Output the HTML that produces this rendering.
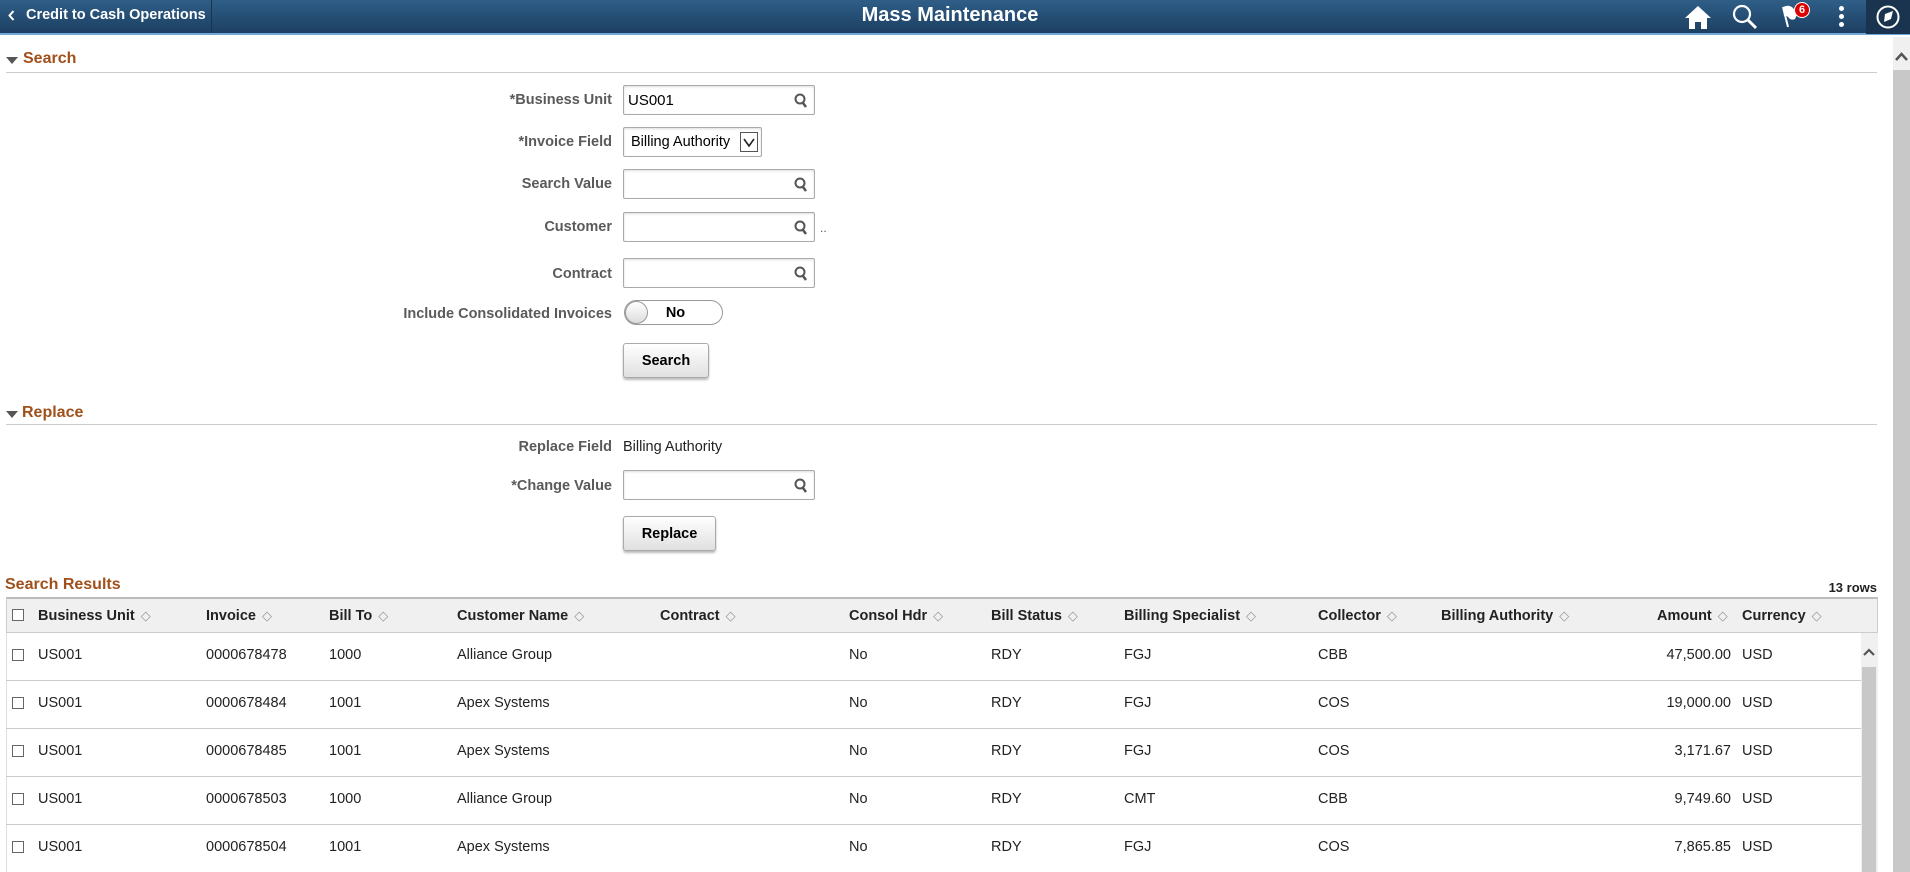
<!DOCTYPE html>
<html><head><meta charset="utf-8"><style>
*{box-sizing:border-box;margin:0;padding:0}
body{width:1910px;height:872px;overflow:hidden;background:#fff;font-family:"Liberation Sans",Arial,sans-serif;position:relative;color:#000}
.a{position:absolute}
.hdr{left:0;top:0;width:1910px;height:35px;background:linear-gradient(#2f5e87,#1c3f62);border-bottom:2px solid #6fa8d8}
.back{left:0;top:0;width:212px;height:33px;border-right:1px solid #16344f;color:#fff;font-weight:bold;font-size:14.5px;line-height:30px;padding-left:26px}
.title{left:0;width:1900px;top:1px;text-align:center;color:#fff;font-weight:bold;font-size:20px;line-height:29px}
.sec{color:#a0501a;font-weight:bold;font-size:16px}
.tri{width:0;height:0;border-left:6px solid transparent;border-right:6px solid transparent;border-top:7px solid #555}
.hr{height:1px;background:#ccc}
.lbl{width:612px;left:0;text-align:right;color:#5a5a5a;font-weight:bold;font-size:14.5px}
.inp{left:623px;width:192px;height:30px;border:1px solid #aaa;border-radius:2px;background:#fff;box-shadow:inset 0 1px 2px #ddd;font-size:15px;line-height:29px;padding-left:4px}
.mag{position:absolute;right:6px;top:7px}
.btn{left:623px;height:35px;border:1px solid #aaa;border-radius:3px;background:linear-gradient(#fff,#e0e0e0);box-shadow:0 2px 2px #bbb;font-weight:bold;font-size:14.5px;text-align:center;line-height:34px}
.th{top:598px;height:36px;line-height:36px;font-weight:bold;font-size:14.5px;color:#222}
.srt{display:inline-block;margin-left:6px;color:#999;font-size:13px;font-weight:normal;vertical-align:0}
.cb{width:12px;height:12px;border:1px solid #666;background:#fff}
.row{left:0;width:1860px;font-size:14.5px;color:#222}
</style></head><body>
<div class="a hdr"></div>
<div class="a back"><svg class="a" style="left:8px;top:10px" width="7" height="11" viewBox="0 0 7 11"><path d="M5.5 1 L1.5 5.5 L5.5 10" fill="none" stroke="#fff" stroke-width="2"/></svg>Credit to Cash Operations</div>
<div class="a title">Mass Maintenance</div>
<svg class="a" style="left:1684px;top:4px" width="28" height="26" viewBox="0 0 28 26"><path d="M14 2 L1 14 H5 V25 H11 V18 H17 V25 H23 V14 H27 Z" fill="#fff"/></svg>
<svg class="a" style="left:1731px;top:3px" width="28" height="28" viewBox="0 0 28 28"><circle cx="11" cy="11" r="8" fill="none" stroke="#fff" stroke-width="2.2"/><path d="M17 17 L25 25" stroke="#fff" stroke-width="3"/></svg>
<svg class="a" style="left:1780px;top:4px" width="22" height="24" viewBox="0 0 22 24"><path d="M3 3 Q9 0 13 4 Q15 7 19 6 L15 15 Q11 17 8 13 Q6 11 4 12" fill="#fff"/><path d="M3 3 L8 23" stroke="#fff" stroke-width="2"/></svg>
<div class="a" style="left:1794px;top:2px;width:16px;height:16px;border-radius:8px;background:#d00;border:1px solid #fff;color:#fff;font-size:11px;font-weight:bold;text-align:center;line-height:14px">6</div>
<div class="a" style="left:1839px;top:6px;width:5px;height:5px;border-radius:3px;background:#fff"></div>
<div class="a" style="left:1839px;top:14px;width:5px;height:5px;border-radius:3px;background:#fff"></div>
<div class="a" style="left:1839px;top:22px;width:5px;height:5px;border-radius:3px;background:#fff"></div>
<div class="a" style="left:1866px;top:0;width:44px;height:34px;background:#1a3450"></div>
<svg class="a" style="left:1875px;top:4px" width="26" height="26" viewBox="0 0 26 26"><circle cx="13" cy="13" r="10.5" fill="none" stroke="#fff" stroke-width="2"/><path d="M9 18 L10 10 L18 7 L16 15 Z" fill="#fff"/></svg>

<div class="a" style="left:1893px;top:37px;width:17px;height:835px;background:#f0f0f0"></div>
<div class="a" style="left:1893px;top:70px;width:17px;height:802px;background:#c8c8c8"></div>
<svg class="a" style="left:1895px;top:52px" width="13" height="10" viewBox="0 0 13 10"><path d="M1 8 L6.5 2 L12 8" fill="none" stroke="#555" stroke-width="2.5"/></svg>

<div class="a tri" style="left:6px;top:57px"></div>
<div class="a sec" style="left:23px;top:50px">Search</div>
<div class="a hr" style="left:6px;top:72px;width:1871px"></div>

<div class="a lbl" style="top:92px">*Business Unit</div>
<div class="a inp" style="top:85px">US001<svg class="mag" width="14" height="15" viewBox="0 0 14 15"><circle cx="6" cy="6" r="4.5" fill="none" stroke="#555" stroke-width="2"/><path d="M9 10 L12 14" stroke="#555" stroke-width="2.5"/></svg></div>
<div class="a lbl" style="top:134px">*Invoice Field</div>
<div class="a inp" style="top:127px;width:139px;padding-left:7px;font-size:14.5px">Billing Authority<div class="a" style="right:3px;top:4px;width:18px;height:20px;border:1px solid #555;background:#fff"><svg width="16" height="18" viewBox="0 0 16 18"><path d="M3 6 L8 13 L13 6" fill="none" stroke="#222" stroke-width="1.6"/></svg></div></div>
<div class="a lbl" style="top:176px">Search Value</div>
<div class="a inp" style="top:169px"><svg class="mag" width="14" height="15" viewBox="0 0 14 15"><circle cx="6" cy="6" r="4.5" fill="none" stroke="#555" stroke-width="2"/><path d="M9 10 L12 14" stroke="#555" stroke-width="2.5"/></svg></div>
<div class="a lbl" style="top:219px">Customer</div>
<div class="a inp" style="top:212px"><svg class="mag" width="14" height="15" viewBox="0 0 14 15"><circle cx="6" cy="6" r="4.5" fill="none" stroke="#555" stroke-width="2"/><path d="M9 10 L12 14" stroke="#555" stroke-width="2.5"/></svg></div>
<div class="a" style="left:820px;top:221px;font-size:12px;color:#555">..</div>
<div class="a lbl" style="top:266px">Contract</div>
<div class="a inp" style="top:258px"><svg class="mag" width="14" height="15" viewBox="0 0 14 15"><circle cx="6" cy="6" r="4.5" fill="none" stroke="#555" stroke-width="2"/><path d="M9 10 L12 14" stroke="#555" stroke-width="2.5"/></svg></div>
<div class="a lbl" style="top:306px">Include Consolidated Invoices</div>
<div class="a" style="left:624px;top:300px;width:99px;height:25px;border:1px solid #999;border-radius:13px;background:#fff;font-weight:bold;font-size:14.5px;line-height:24px;text-align:center;padding-left:4px">No</div>
<div class="a" style="left:625px;top:301px;width:23px;height:23px;border-radius:12px;border:1px solid #999;background:linear-gradient(#fff,#ddd)"></div>
<div class="a btn" style="top:343px;width:86px">Search</div>

<div class="a tri" style="left:6px;top:411px"></div>
<div class="a sec" style="left:22px;top:404px">Replace</div>
<div class="a hr" style="left:6px;top:424px;width:1871px"></div>
<div class="a lbl" style="top:439px">Replace Field</div>
<div class="a" style="left:623px;top:439px;font-size:14.5px;color:#222">Billing Authority</div>
<div class="a lbl" style="top:478px">*Change Value</div>
<div class="a inp" style="top:470px"><svg class="mag" width="14" height="15" viewBox="0 0 14 15"><circle cx="6" cy="6" r="4.5" fill="none" stroke="#555" stroke-width="2"/><path d="M9 10 L12 14" stroke="#555" stroke-width="2.5"/></svg></div>
<div class="a btn" style="top:516px;width:93px">Replace</div>

<div class="a sec" style="left:5px;top:576px">Search Results</div>
<div class="a" style="right:33px;top:580px;font-size:13px;font-weight:bold;color:#222">13 rows</div>
<div class="a" style="left:6px;top:597px;width:1872px;height:36px;background:#f0f0f0;border:1px solid #ccc;border-top:2px solid #bbb"></div>
<div class="a cb" style="left:12px;top:609px"></div>
<div class="a th" style="left:38px">Business Unit<span class="srt">&#9671;</span></div>
<div class="a th" style="left:206px">Invoice<span class="srt">&#9671;</span></div>
<div class="a th" style="left:329px">Bill To<span class="srt">&#9671;</span></div>
<div class="a th" style="left:457px">Customer Name<span class="srt">&#9671;</span></div>
<div class="a th" style="left:660px">Contract<span class="srt">&#9671;</span></div>
<div class="a th" style="left:849px">Consol Hdr<span class="srt">&#9671;</span></div>
<div class="a th" style="left:991px">Bill Status<span class="srt">&#9671;</span></div>
<div class="a th" style="left:1124px">Billing Specialist<span class="srt">&#9671;</span></div>
<div class="a th" style="left:1318px">Collector<span class="srt">&#9671;</span></div>
<div class="a th" style="left:1441px">Billing Authority<span class="srt">&#9671;</span></div>
<div class="a th" style="left:1657px">Amount<span class="srt">&#9671;</span></div>
<div class="a th" style="left:1742px">Currency<span class="srt">&#9671;</span></div>

<div class="a" style="left:6px;top:633px;width:1px;height:239px;background:#ddd"></div>
<div class="a" style="left:1861px;top:633px;width:17px;height:239px;background:#f0f0f0"></div>
<div class="a" style="left:1862px;top:667px;width:14px;height:205px;background:#c8c8c8"></div>
<svg class="a" style="left:1863px;top:648px" width="12" height="9" viewBox="0 0 12 9"><path d="M1 7 L6 2 L11 7" fill="none" stroke="#555" stroke-width="2.2"/></svg>

<div class="a hr" style="left:6px;top:680px;width:1855px"></div>
<div class="a hr" style="left:6px;top:728px;width:1855px"></div>
<div class="a hr" style="left:6px;top:776px;width:1855px"></div>
<div class="a hr" style="left:6px;top:824px;width:1855px"></div>

<div class="a row" style="top:647px">
<div class="a cb" style="left:12px;top:2px"></div><div class="a" style="left:38px">US001</div><div class="a" style="left:206px">0000678478</div><div class="a" style="left:329px">1000</div><div class="a" style="left:457px">Alliance Group</div><div class="a" style="left:849px">No</div><div class="a" style="left:991px">RDY</div><div class="a" style="left:1124px">FGJ</div><div class="a" style="left:1318px">CBB</div><div class="a" style="right:129px">47,500.00</div><div class="a" style="left:1742px">USD</div>
</div>
<div class="a row" style="top:695px">
<div class="a cb" style="left:12px;top:2px"></div><div class="a" style="left:38px">US001</div><div class="a" style="left:206px">0000678484</div><div class="a" style="left:329px">1001</div><div class="a" style="left:457px">Apex Systems</div><div class="a" style="left:849px">No</div><div class="a" style="left:991px">RDY</div><div class="a" style="left:1124px">FGJ</div><div class="a" style="left:1318px">COS</div><div class="a" style="right:129px">19,000.00</div><div class="a" style="left:1742px">USD</div>
</div>
<div class="a row" style="top:743px">
<div class="a cb" style="left:12px;top:2px"></div><div class="a" style="left:38px">US001</div><div class="a" style="left:206px">0000678485</div><div class="a" style="left:329px">1001</div><div class="a" style="left:457px">Apex Systems</div><div class="a" style="left:849px">No</div><div class="a" style="left:991px">RDY</div><div class="a" style="left:1124px">FGJ</div><div class="a" style="left:1318px">COS</div><div class="a" style="right:129px">3,171.67</div><div class="a" style="left:1742px">USD</div>
</div>
<div class="a row" style="top:791px">
<div class="a cb" style="left:12px;top:2px"></div><div class="a" style="left:38px">US001</div><div class="a" style="left:206px">0000678503</div><div class="a" style="left:329px">1000</div><div class="a" style="left:457px">Alliance Group</div><div class="a" style="left:849px">No</div><div class="a" style="left:991px">RDY</div><div class="a" style="left:1124px">CMT</div><div class="a" style="left:1318px">CBB</div><div class="a" style="right:129px">9,749.60</div><div class="a" style="left:1742px">USD</div>
</div>
<div class="a row" style="top:839px">
<div class="a cb" style="left:12px;top:2px"></div><div class="a" style="left:38px">US001</div><div class="a" style="left:206px">0000678504</div><div class="a" style="left:329px">1001</div><div class="a" style="left:457px">Apex Systems</div><div class="a" style="left:849px">No</div><div class="a" style="left:991px">RDY</div><div class="a" style="left:1124px">FGJ</div><div class="a" style="left:1318px">COS</div><div class="a" style="right:129px">7,865.85</div><div class="a" style="left:1742px">USD</div>
</div>
</body></html>
